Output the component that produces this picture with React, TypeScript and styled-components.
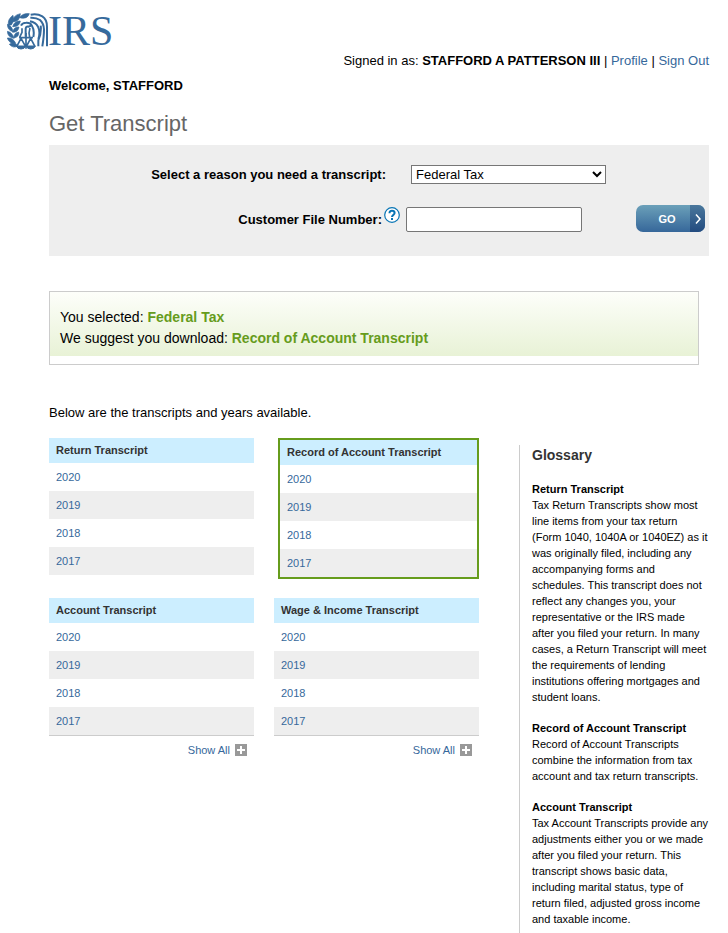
import React, { useState } from "react";
import styled, { createGlobalStyle } from "styled-components";

const GlobalStyle = createGlobalStyle`
  *, *::before, *::after { box-sizing: border-box; }
  body {
    margin: 0;
    background: #fff;
    color: #000;
    font: 13px/16px "Liberation Sans", Arial, Helvetica, sans-serif;
  }
  h1, h2, h3, p, dl, dd { margin: 0; }
`;

const LINK = "#36689b";
const GREEN = "#669c1c";

const TextLink = styled.a`
  color: ${LINK};
  text-decoration: none;
  &:hover { text-decoration: underline; }
`;

const Page = styled.div`
  padding: 13px 19px 0 49px;
`;

const Header = styled.header`
  margin-left: -42px;
`;

const LogoLink = styled.a`
  display: flex;
  width: max-content;
  color: #366a9c;
  text-decoration: none;
`;

const LogoText = styled.span`
  font: 42px/36px "Liberation Serif", "Times New Roman", serif;
`;

const Account = styled.nav`
  margin-top: 3px;
  text-align: right;
`;

const Welcome = styled.p`
  margin-top: 9px;
  font-weight: bold;
`;

const Title = styled.h1`
  margin-top: 17px;
  color: #666;
  font-size: 22px;
  line-height: 26px;
  font-weight: normal;
`;

const RequestForm = styled.form`
  display: grid;
  grid-template-columns: 337fr 210fr auto;
  column-gap: 20px;
  align-items: center;
  margin-top: 8px;
  padding: 7px 4px 14px 0;
  background: #eee;
`;

const FormLabel = styled.label`
  font-weight: bold;
  text-align: right;
`;

const LabelCell = styled.div`
  display: flex;
  justify-content: flex-end;
  align-items: center;
  gap: 2px;
  height: 45px;
`;

const FileLabelCell = styled(LabelCell)`
  grid-column: 1;
  margin-right: -14px;
`;

const HelpButton = styled.button`
  display: flex;
  align-self: flex-start;
  width: 16px;
  height: 16px;
  margin-top: 10px;
  padding: 0;
  border: 0;
  background: none;
`;

const ReasonSelect = styled.select`
  width: 195px;
  height: 19px;
  margin-left: 5px;
  padding: 0;
  border: 1px solid #767676;
  border-radius: 0;
  background: #fff;
  font: 13px "Liberation Sans", Arial, sans-serif;
`;

const FileInput = styled.input`
  width: 176px;
  height: 25px;
  padding: 2px 4px;
  border: 1px solid #767676;
  border-radius: 2px;
  font: 13px "Liberation Sans", Arial, sans-serif;
`;

const GoButton = styled.button`
  display: flex;
  align-items: center;
  grid-column: 3;
  width: 69px;
  height: 27px;
  margin-bottom: 2px;
  padding: 0;
  overflow: hidden;
  border: 0;
  border-radius: 7px;
  background: linear-gradient(#6ba0b9, #36679a);
  color: #fff;
  font: bold 11px "Liberation Sans", Arial, sans-serif;
`;

const GoLabel = styled.span`
  flex: 1;
  padding-left: 8px;
`;

const GoArrow = styled.span`
  display: flex;
  align-items: center;
  justify-content: center;
  width: 15px;
  height: 100%;
  background: linear-gradient(#4a779c, #234b7f);
`;

const Suggestion = styled.section`
  margin: 35px 10px 0 0;
  padding: 15px 10px 15px;
  border: 1px solid #ccc;
  background: linear-gradient(#fdfefa, #e8f2d6) top / 100% calc(100% - 8px) no-repeat;
  font-size: 14px;
  line-height: 21px;
`;

const Highlight = styled.strong`
  color: ${GREEN};
`;

const Intro = styled.p`
  margin-top: 40px;
`;

const Columns = styled.div`
  display: grid;
  grid-template-columns: minmax(0, 43fr) minmax(0, 19fr);
  align-items: start;
  gap: 40px;
  margin-top: 17px;
`;

const TranscriptGrid = styled.main`
  display: grid;
  grid-template-columns: 1fr 1fr;
  align-items: start;
  gap: 19px 20px;
`;

const TranscriptCard = styled.section<{ $suggested?: boolean }>`
  ${({ $suggested }) => $suggested && `
    margin-left: 4px;
    border: 2px solid ${GREEN};
  `}
`;

const YearTable = styled.table<{ $ruled?: boolean }>`
  width: 100%;
  border-spacing: 0;
  font-size: 11px;
  line-height: 14px;
  border-bottom: ${({ $ruled }) => ($ruled ? "1px solid #ccc" : "0")};

  th {
    height: 25px;
    padding: 0 7px 2px;
    background: #cef;
    color: #333;
    text-align: left;
  }
  td {
    height: 28px;
    padding: 0 7px;
  }
  tbody tr:nth-child(even) { background: #eee; }
`;

const ShowAll = styled.a`
  display: flex;
  justify-content: flex-end;
  gap: 5px;
  align-items: center;
  padding: 7px 7px 0 0;
  color: ${LINK};
  font-size: 11px;
  line-height: 14px;
  text-decoration: none;
`;

const Glossary = styled.aside`
  margin-top: 7px;
  padding: 0 0 6px 12px;
  border-left: 1px solid #ccc;
  font-size: 11px;
  line-height: 16px;
`;

const GlossaryTitle = styled.h2`
  padding-top: 2px;
  color: #333;
  font-size: 14px;
  line-height: 16px;
`;

const Terms = styled.dl`
  dt { margin-top: 15px; font-weight: bold; }
  dt:first-child { margin-top: 18px; }
`;

function EagleEmblem() {
  return (
    <svg width="41" height="37" viewBox="20 37 123 111" fill="none" stroke="currentColor" strokeWidth="6" aria-hidden="true">
      <g fill="currentColor" strokeWidth="2">
        <path d="M24 73q-2-18 14-29q5 16-5 29z" />
        <path d="M37 64q0-20 23-25q0 23-23 25z" />
        <path d="M58 51q9-14 29-12q-6 18-29 12z" />
        <path d="M37 78q5-18 23-17q-2 18-23 17z" />
        <path d="M21 71q14 4 17 22q-16-3-17-22z" />
        <path d="M37 95q3-17 19-16q-2 16-19 16z" />
        <path d="M21 92q15 3 20 21q-19-3-20-21z" />
        <path d="M41 112q-1-15 14-18q3 14-14 18z" />
        <path d="M21 112q17-2 25 16q-19 3-25-16z" />
        <path d="M27 131q14-9 26 4q-14 10-26-4z" />
      </g>
      <path d="M91 42q20-4 35 5q14 9 14 31v59M90 51q18-1 29 7q11 10 12 28q0 21-5 51M89 62q17 3 24 16q8 17 1 37M95 76q8 12 4 33M121 75q3 20-7 44v18" />
      <path d="M62 75q4-9 15-9q13-1 17 8l-10 4q-7-1-8 6v24" strokeWidth="6" />
      <path d="M65 83v12q-4 8-7 15M89 82q-5 14-1 28M56 111h42M77 97v47M62 113l-13 25M62 113l14 25M91 113l-13 25M91 113l13 25" strokeWidth="5" />
      <path d="M48 136h28q-3 9-14 9t-14-9zM78 136h27q-3 9-14 9t-13-9z" fill="currentColor" strokeWidth="3" />
    </svg>
  );
}

function HelpIcon() {
  return (
    <svg width="16" height="16" viewBox="0 0 16 16" fill="none" stroke="#0875b5" aria-hidden="true">
      <circle cx="8" cy="8" r="7.3" fill="#fff" strokeWidth="1.2" />
      <path d="M5.500 6.200C5.500 4.500 6.600 3.800 8 3.800s2.600.8 2.600 2.300C10.600 8 8 7.700 8 10" strokeWidth="2" />
      <path d="M8 11v2" strokeWidth="2" />
    </svg>
  );
}

const YEARS = [2020, 2019, 2018, 2017];

const TRANSCRIPTS = [
  { name: "Return Transcript" },
  { name: "Record of Account Transcript", suggested: true },
  { name: "Account Transcript", expandable: true },
  { name: "Wage & Income Transcript", expandable: true },
];

const TERMS = [
  ["Return Transcript", "Tax Return Transcripts show most line items from your tax return (Form 1040, 1040A or 1040EZ) as it was originally filed, including any accompanying forms and schedules. This transcript does not reflect any changes you, your representative or the IRS made after you filed your return. In many cases, a Return Transcript will meet the requirements of lending institutions offering mortgages and student loans."],
  ["Record of Account Transcript", "Record of Account Transcripts combine the information from tax account and tax return transcripts."],
  ["Account Transcript", "Tax Account Transcripts provide any adjustments either you or we made after you filed your return. This transcript shows basic data, including marital status, type of return filed, adjusted gross income and taxable income."],
];

export default function App() {
  const [fileNumber, setFileNumber] = useState("");
  return (
    <>
      <GlobalStyle />
      <Page>
        <Header>
          <LogoLink href="#home">
            <EagleEmblem />
            <LogoText>IRS</LogoText>
          </LogoLink>
          <Account>
            Signed in as: <strong>STAFFORD A PATTERSON III</strong> |{" "}
            <TextLink href="#profile">Profile</TextLink> | <TextLink href="#signout">Sign Out</TextLink>
          </Account>
        </Header>
        <Welcome>Welcome, STAFFORD</Welcome>
        <Title>Get Transcript</Title>

        <RequestForm onSubmit={(e) => e.preventDefault()}>
          <LabelCell>
            <FormLabel htmlFor="reason">Select a reason you need a transcript:</FormLabel>
          </LabelCell>
          <ReasonSelect id="reason" defaultValue="Federal Tax">
            <option>Federal Tax</option>
          </ReasonSelect>
          <FileLabelCell>
            <FormLabel htmlFor="file-number">Customer File Number:</FormLabel>
            <HelpButton type="button" aria-label="Help with customer file number">
              <HelpIcon />
            </HelpButton>
          </FileLabelCell>
          <FileInput id="file-number" value={fileNumber} onChange={(e) => setFileNumber(e.target.value)} />
          <GoButton type="submit">
            <GoLabel>GO</GoLabel>
            <GoArrow>
              <svg width="6" height="10" viewBox="0 0 6 10" fill="none" stroke="#fff" strokeWidth="1.5" aria-hidden="true">
                <path d="M1 .5 5 5 1 9.500" />
              </svg>
            </GoArrow>
          </GoButton>
        </RequestForm>

        <Suggestion>
          <p>You selected: <Highlight>Federal Tax</Highlight></p>
          <p>We suggest you download: <Highlight>Record of Account Transcript</Highlight></p>
        </Suggestion>

        <Intro>Below are the transcripts and years available.</Intro>

        <Columns>
          <TranscriptGrid>
            {TRANSCRIPTS.map(({ name, suggested, expandable }) => (
              <TranscriptCard key={name} $suggested={suggested}>
                <YearTable $ruled={expandable}>
                  <thead>
                    <tr><th scope="col">{name}</th></tr>
                  </thead>
                  <tbody>
                    {YEARS.map((year) => (
                      <tr key={year}>
                        <td><TextLink href={`#${year}`}>{year}</TextLink></td>
                      </tr>
                    ))}
                  </tbody>
                </YearTable>
                {expandable && (
                  <ShowAll href="#all">
                    Show All
                    <svg width="12" height="12" viewBox="0 0 12 12" aria-hidden="true">
                      <path fill="#999" d="M0 0h12v12H0z" />
                      <path stroke="#fff" strokeWidth="2" d="M6 2v8M2 6h8" />
                    </svg>
                  </ShowAll>
                )}
              </TranscriptCard>
            ))}
          </TranscriptGrid>
          <Glossary>
            <GlossaryTitle>Glossary</GlossaryTitle>
            <Terms>
              {TERMS.map(([term, text]) => (
                <React.Fragment key={term}>
                  <dt>{term}</dt>
                  <dd>{text}</dd>
                </React.Fragment>
              ))}
            </Terms>
          </Glossary>
        </Columns>
      </Page>
    </>
  );
}
